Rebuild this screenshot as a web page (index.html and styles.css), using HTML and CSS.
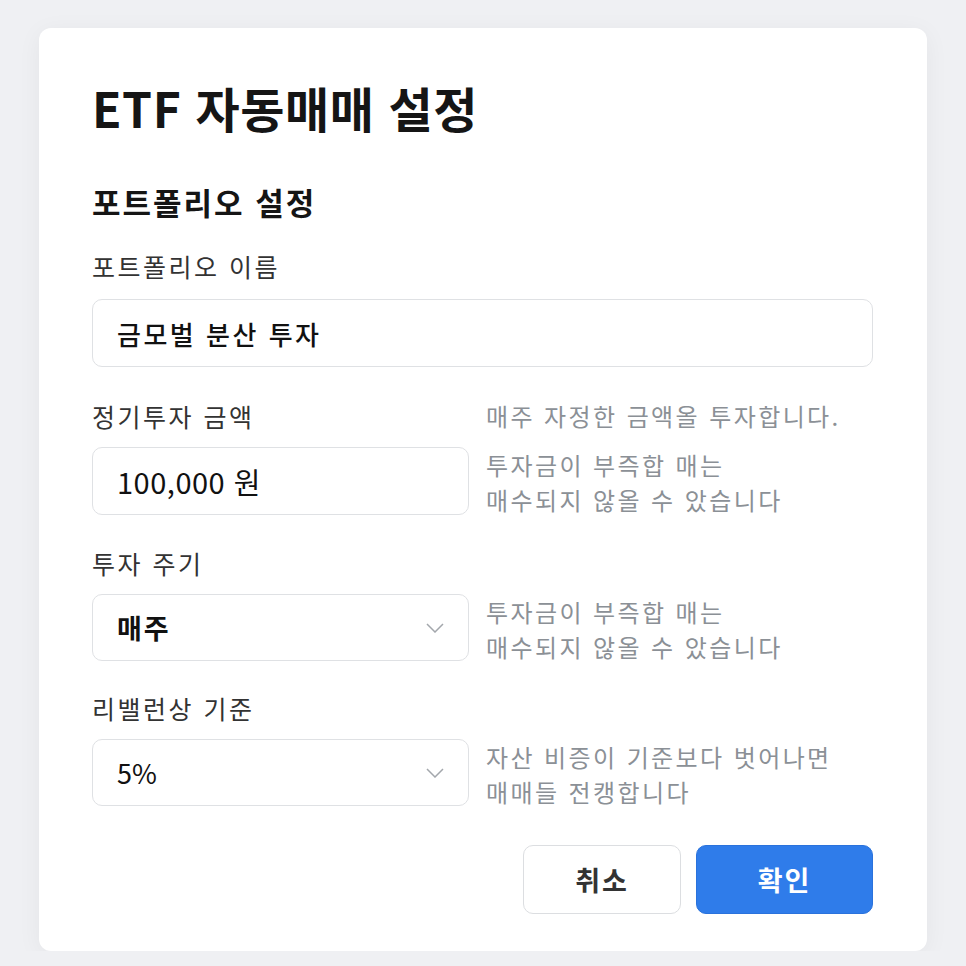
FILE: index.html
```html
<!DOCTYPE html>
<html lang="ko">
<head>
  <meta charset="UTF-8" />
  <meta name="viewport" content="width=device-width, initial-scale=1" />
  <title>ETF 자동매매 설정</title>
  <link rel="stylesheet" href="styles.css">
</head>
<body>
  <div class="settings-card">
    <h1>ETF 자동매매 설정</h1>
    <h2>포트폴리오 설정</h2>

    <form id="settingsForm">
      <label class="field-label" for="name">포트폴리오 이름</label>
      <input type="text" id="name" class="text-input wide" value="금모벌 분산 투자" />

      <div class="field first">
        <label class="field-label" for="amount">정기투자 금액</label>
        <p class="hint top">매주 자정한 금액올 투자합니다.</p>
        <input type="text" id="amount" class="text-input amount" value="100,000 원" />
        <p class="hint">투자금이 부즉합 매는<br>매수되지 않올 수 았습니다</p>
      </div>

      <div class="field">
        <label class="field-label" for="cycle">투자 주기</label>
        <span></span>
        <div class="select-box" id="cycle">
          <span class="select-value bold">매주</span>
          <svg class="chevron" width="18" height="10" viewBox="0 0 18 10"><polyline points="1,1 9,9 17,1" /></svg>
        </div>
        <p class="hint">투자금이 부즉합 매는<br>매수되지 않올 수 았습니다</p>
      </div>

      <div class="field last">
        <label class="field-label" for="rebalance">리밸런상 기준</label>
        <span></span>
        <div class="select-box" id="rebalance">
          <span class="select-value">5%</span>
          <svg class="chevron" width="18" height="10" viewBox="0 0 18 10"><polyline points="1,1 9,9 17,1" /></svg>
        </div>
        <p class="hint">자산 비증이 기준보다 벗어나면<br>매매들 전캥합니다</p>
      </div>

      <div class="actions">
        <button type="button" class="btn-cancel">취소</button>
        <button type="submit" class="btn-ok">확인</button>
      </div>
    </form>
  </div>
</body>
</html>
```

FILE: styles.css
```css
body {
  font-family: "Noto Sans CJK KR", "Noto Sans", sans-serif;
  background: #eff0f3;
  margin: 0;
  padding: 28px 39px 0 39px;
}
.settings-card {
  background: #fff;
  width: 888px;
  height: 923px;
  box-sizing: border-box;
  padding: 50px 54px 0 53px;
  border-radius: 12px;
  box-shadow: 0 4px 24px rgba(0,0,0,0.05);
}
h1 {
  margin: 0;
  font-size: 48px;
  line-height: 58px;
  font-weight: 700;
  color: #151515;
  letter-spacing: 0.6px;
}
h2 {
  margin: 46px 0 0;
  font-size: 31px;
  line-height: 40px;
  font-weight: 700;
  color: #151515;
  letter-spacing: 2px;
}
.field-label {
  display: block;
  font-size: 25px;
  line-height: 36px;
  color: #333;
  letter-spacing: 2.5px;
}
form > .field-label {
  margin-top: 26px;
  margin-bottom: 15px;
}
.text-input {
  display: block;
  box-sizing: border-box;
  height: 68px;
  padding: 0 24px;
  border: 1.5px solid #dfe1e4;
  border-radius: 10px;
  font-family: inherit;
  font-size: 26px;
  color: #111;
  outline: none;
}
.text-input.wide {
  width: 781px;
  font-weight: 500;
  letter-spacing: 2.5px;
}
.text-input.amount {
  font-size: 29px;
  letter-spacing: 0.5px;
}
.field {
  display: grid;
  grid-template-columns: 377px 1fr;
  column-gap: 17px;
  row-gap: 13px;
  margin-top: 28px;
}
.field.first {
  margin-top: 31px;
}
.field.last {
  margin-top: 26px;
}
.hint {
  margin: 0;
  font-size: 24px;
  line-height: 35px;
  color: #8b9096;
  letter-spacing: 2.4px;
}
.hint.top {
  line-height: 36px;
}
.select-box {
  box-sizing: border-box;
  height: 67px;
  padding: 0 24px;
  border: 1.5px solid #dfe1e4;
  border-radius: 10px;
  display: flex;
  align-items: center;
  justify-content: space-between;
}
.select-value {
  font-size: 27px;
  color: #111;
}
.select-value.bold {
  font-weight: 700;
  letter-spacing: 2px;
}
.chevron polyline {
  fill: none;
  stroke: #a3a7ac;
  stroke-width: 1.5;
}
.actions {
  display: flex;
  justify-content: flex-end;
  gap: 15px;
  margin-top: 36px;
}
.actions button {
  height: 69px;
  border-radius: 10px;
  font-family: inherit;
  font-size: 27px;
  font-weight: 700;
  letter-spacing: 2px;
  cursor: pointer;
}
.btn-cancel {
  width: 158px;
  background: #fff;
  border: 1.5px solid #dcdee1;
  color: #333;
}
.btn-ok {
  width: 177px;
  background: #2f7cea;
  border: 1px solid #2a72dc;
  color: #fff;
}
```
